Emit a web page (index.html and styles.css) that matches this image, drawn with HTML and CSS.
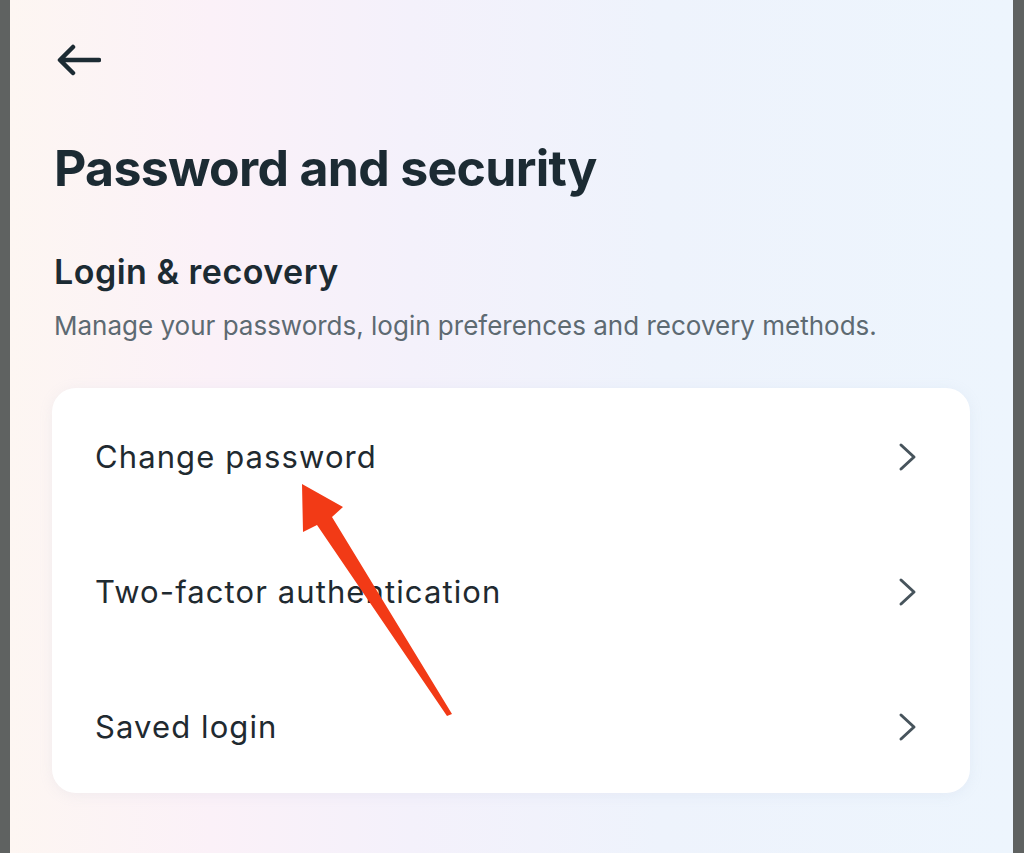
FILE: index.html
```html
<!DOCTYPE html>
<html>
<head>
<meta charset="utf-8">
<link rel="stylesheet" href="styles.css">
</head>
<body>
<div class="frame">
  <div class="bar"></div>
  <main class="screen">
    <button class="back" aria-label="Back">
      <svg width="44" height="34" viewBox="0 0 44 34"><path d="M42 16 H4 M16 3 L3 16 L16 29" fill="none" stroke="#1c2b33" stroke-width="4.5" stroke-linecap="round" stroke-linejoin="round"/></svg>
    </button>
    <h1 class="title">Password and security</h1>
    <h2 class="section">Login &amp; recovery</h2>
    <p class="desc">Manage your passwords, login preferences and recovery methods.</p>
    <div class="card">
      <div class="row"><span class="label">Change password</span><svg class="chev" width="20" height="30" viewBox="0 0 20 30"><path d="M3 3 L16 15 L3 27" fill="none" stroke="#47545c" stroke-width="3" stroke-linecap="round" stroke-linejoin="round"/></svg></div>
      <div class="row"><span class="label">Two-factor authentication</span><svg class="chev" width="20" height="30" viewBox="0 0 20 30"><path d="M3 3 L16 15 L3 27" fill="none" stroke="#47545c" stroke-width="3" stroke-linecap="round" stroke-linejoin="round"/></svg></div>
      <div class="row"><span class="label">Saved login</span><svg class="chev" width="20" height="30" viewBox="0 0 20 30"><path d="M3 3 L16 15 L3 27" fill="none" stroke="#47545c" stroke-width="3" stroke-linecap="round" stroke-linejoin="round"/></svg></div>
    </div>
    <svg class="pointer" width="1004" height="853" viewBox="10 0 1004 853">
      <polygon points="302,484 343,507 332,517 452,714 447,716 317,525 303,532" fill="#f23a16"/>
    </svg>
  </main>
  <div class="bar"></div>
</div>
</body>
</html>
```
FILE: styles.css
```css
* { box-sizing: border-box; margin: 0; padding: 0; }
html, body { width: 1024px; height: 853px; overflow: hidden; }
body { font-family: Inter, "Noto Sans", sans-serif; color: #1c2b33; }
.frame { display: flex; width: 1024px; height: 853px; }
.bar { width: 10px; flex: none; background: #5f6261; }
.bar:last-child { width: 11px; }
.screen {
  position: relative;
  flex: 1;
  padding: 0 0 0 44px;
  background: linear-gradient(90deg, #fdf6f2 0%, #fbf1f8 20%, #f4f1fb 40%, #eef3fc 65%, #edf5fd 100%);
}
.back { display: block; background: none; border: 0; margin: 44px 0 0 3px; width: 44px; height: 34px; }
.back svg { display: block; }
.title { font-size: 50px; font-weight: 700; letter-spacing: -0.7px; line-height: 56px; margin-top: 62px; }
.section { font-size: 34px; font-weight: 600; letter-spacing: 0.5px; line-height: 40px; margin-top: 56px; }
.desc { font-size: 26px; font-weight: 400; color: #5d6a72; line-height: 30px; margin-top: 19px; }
.card {
  width: 918px;
  margin-top: 47px;
  margin-left: -2px;
  background: #fff;
  border-radius: 24px;
  box-shadow: 0 2px 14px rgba(160, 170, 200, 0.12);
}
.row { display: flex; align-items: center; justify-content: space-between; height: 135px; padding: 2px 52px 0 43px; }
.label { font-size: 31px; font-weight: 400; letter-spacing: 1.1px; color: #1f2a30; }
.chev { display: block; }
.pointer { position: absolute; left: 0; top: 0; pointer-events: none; }
```
